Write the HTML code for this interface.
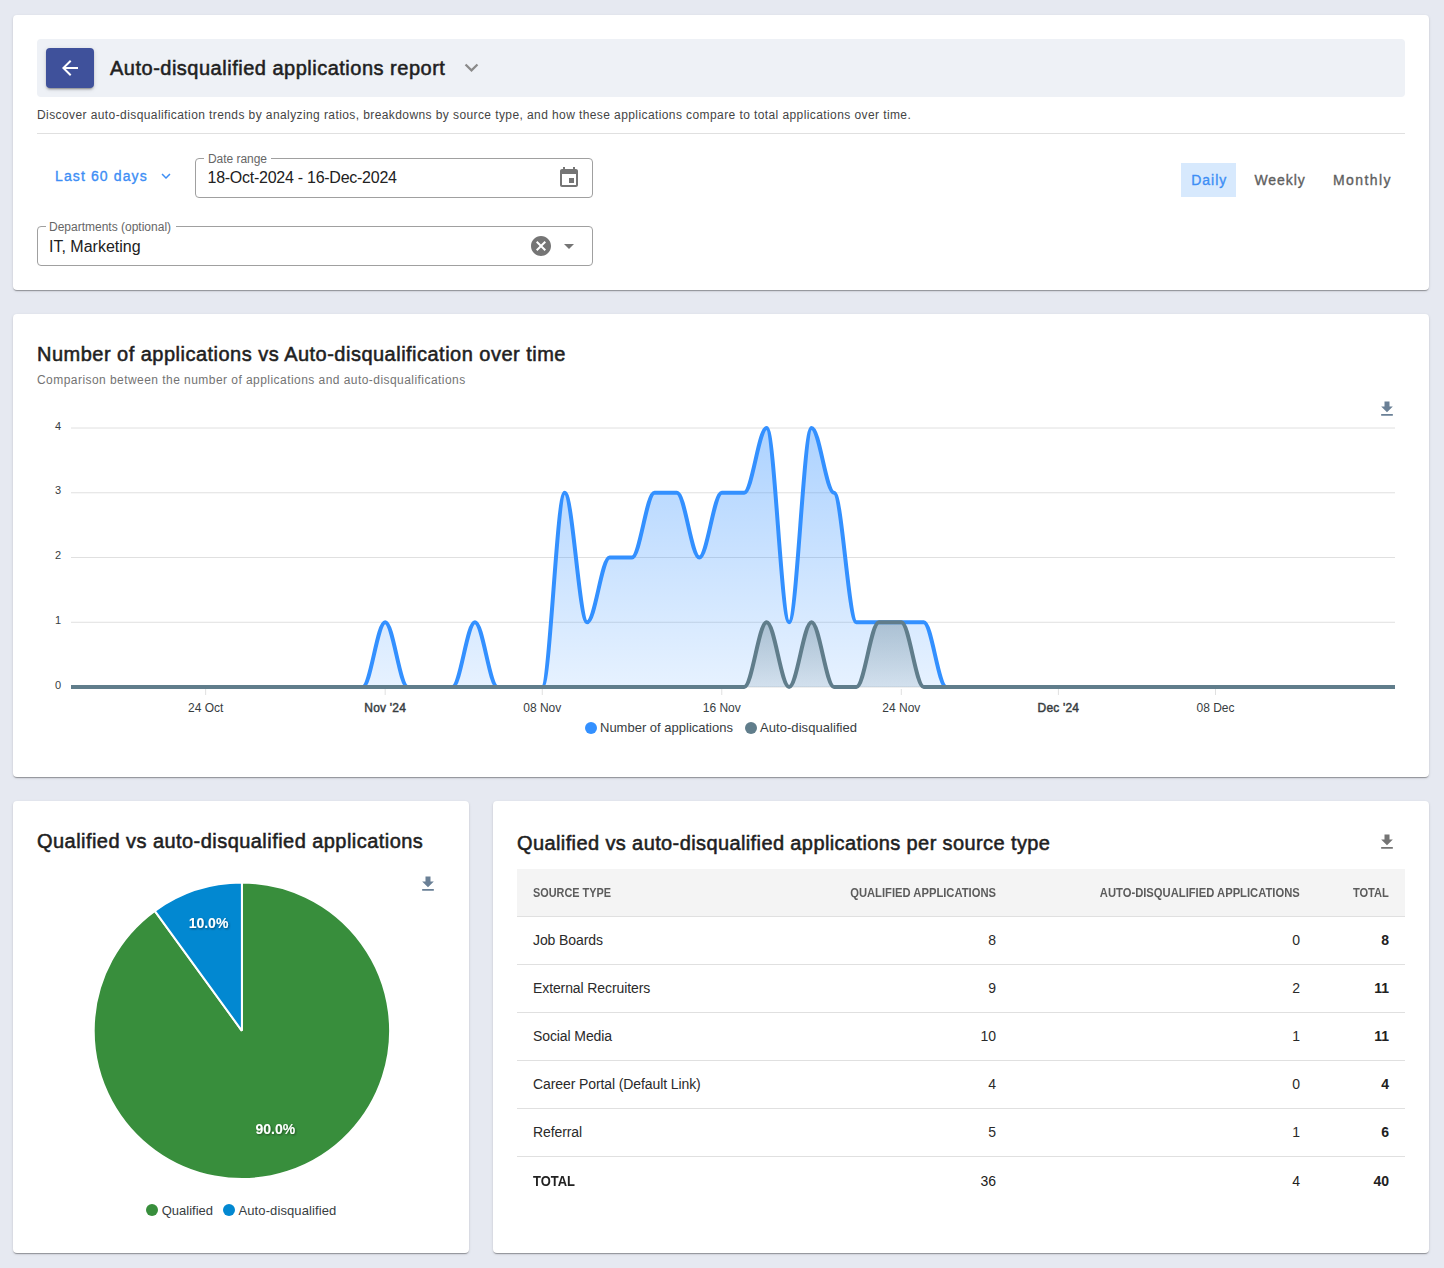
<!DOCTYPE html>
<html><head><meta charset="utf-8"><style>
html,body{margin:0;padding:0;width:1444px;height:1268px;overflow:hidden;background:#e6e9f1;font-family:"Liberation Sans",sans-serif}
.t{position:absolute;line-height:1;white-space:nowrap}
.card{position:absolute;background:#fff;border-radius:4px;box-shadow:0px 2px 1px -1px rgba(0,0,0,0.2),0px 1px 1px 0px rgba(0,0,0,0.14),0px 1px 3px 0px rgba(0,0,0,0.12)}
.backbtn{position:absolute;background:#3f519b;border-radius:4px;box-shadow:0px 3px 1px -2px rgba(0,0,0,0.2),0px 2px 2px 0px rgba(0,0,0,0.14),0px 1px 5px 0px rgba(0,0,0,0.12)}
.ic{position:absolute}
.fs{position:absolute;margin:0;padding:0 8px;box-sizing:border-box;border:1px solid #a0a0a0;border-radius:4px;font-size:12px;line-height:1}
.fs legend{padding:0 4px;visibility:hidden;font-size:12px;line-height:1;height:10px}
</style></head><body>
<div class="card" style="left:13px;top:15px;width:1416px;height:275px"></div>
<div style="position:absolute;left:37px;top:39px;width:1368px;height:58px;background:#eef1f6;border-radius:4px"></div>
<div class="backbtn" style="left:46px;top:48px;width:48px;height:40px"></div>
<svg class="ic" style="left:58.00px;top:56.00px;width:24.00px;height:24.00px;fill:#fff" viewBox="0 0 24 24"><path d="M20 11H7.83l5.59-5.59L12 4l-8 8 8 8 1.41-1.41L7.83 13H20z"/></svg>
<div class="t" style="left:110.00px;top:57.67px;font-size:20px;letter-spacing:0.45px;-webkit-text-stroke:0.55px currentColor;color:#1f1f1f;letter-spacing:0.5px">Auto-disqualified applications report</div>
<svg class="ic" style="left:458.40px;top:53.90px;width:27.00px;height:27.00px;fill:#8a8a8a" viewBox="0 0 24 24"><path d="M16.59 8.59 12 13.17 7.41 8.59 6 10l6 6 6-6z"/></svg>
<div class="t" style="left:37.00px;top:109.34px;font-size:12px;letter-spacing:0.408px;color:#444">Discover auto-disqualification trends by analyzing ratios, breakdowns by source type, and how these applications compare to total applications over time.</div>
<div style="position:absolute;left:37px;top:133px;width:1368px;height:1px;background:#e0e0e0"></div>
<div class="t" style="left:55.00px;top:168.85px;font-size:14px;-webkit-text-stroke:0.35px currentColor;color:#3d8ef5;letter-spacing:1.12px">Last 60 days</div>
<svg class="ic" style="left:157.00px;top:167.40px;width:18.00px;height:18.00px;fill:#3d8ef5" viewBox="0 0 24 24"><path d="M16.59 8.59 12 13.17 7.41 8.59 6 10l6 6 6-6z"/></svg>
<fieldset class="fs" style="left:195px;top:153px;width:398px;height:45px"><legend>Date range</legend></fieldset>
<div class="t" style="left:208.00px;top:153.04px;font-size:12px;color:#666;letter-spacing:-0.05px">Date range</div>
<div class="t" style="left:207.50px;top:170.26px;font-size:16px;color:#212121;letter-spacing:-0.26px">18-Oct-2024 - 16-Dec-2024</div>
<svg class="ic" style="left:557.00px;top:166.00px;width:24.00px;height:24.00px;fill:#757575" viewBox="0 0 24 24"><path d="M17 12h-5v5h5zM16 1v2H8V1H6v2H5c-1.11 0-1.99.9-1.99 2L3 19c0 1.1.89 2 2 2h14c1.1 0 2-.9 2-2V5c0-1.1-.9-2-2-2h-1V1zm3 18H5V8h14z"/></svg>
<div style="position:absolute;left:1181px;top:163px;width:55px;height:34px;background:#d7e9fd"></div>
<div class="t" style="left:1191.30px;top:173.35px;font-size:14px;-webkit-text-stroke:0.35px currentColor;color:#3d8ef5;letter-spacing:0.95px">Daily</div>
<div class="t" style="left:1254.40px;top:173.35px;font-size:14px;-webkit-text-stroke:0.35px currentColor;color:#5f5f5f;letter-spacing:0.93px">Weekly</div>
<div class="t" style="left:1332.90px;top:173.35px;font-size:14px;-webkit-text-stroke:0.35px currentColor;color:#5f5f5f;letter-spacing:1.45px">Monthly</div>
<fieldset class="fs" style="left:37px;top:221px;width:556px;height:45px"><legend>Departments (optional)</legend></fieldset>
<div class="t" style="left:49.00px;top:220.84px;font-size:12px;color:#666">Departments (optional)</div>
<div class="t" style="left:49.00px;top:238.76px;font-size:16px;color:#212121">IT, Marketing</div>
<svg class="ic" style="left:529.00px;top:234.00px;width:24.00px;height:24.00px;fill:#757575" viewBox="0 0 24 24"><path d="M12 2C6.47 2 2 6.47 2 12s4.47 10 10 10 10-4.47 10-10S17.53 2 12 2m5 13.59L15.59 17 12 13.41 8.41 17 7 15.59 10.59 12 7 8.41 8.41 7 12 10.59 15.59 7 17 8.41 13.41 12z"/></svg>
<svg class="ic" style="left:557.00px;top:234.00px;width:24.00px;height:24.00px;fill:#757575" viewBox="0 0 24 24"><path d="M7 10l5 5 5-5z"/></svg>
<div class="card" style="left:13px;top:314px;width:1416px;height:463px"></div>
<div class="t" style="left:37.00px;top:343.77px;font-size:20px;letter-spacing:0.45px;-webkit-text-stroke:0.55px currentColor;color:#1f1f1f;letter-spacing:0.484px">Number of applications vs Auto-disqualification over time</div>
<div class="t" style="left:37.00px;top:373.84px;font-size:12px;letter-spacing:0.45px;color:#737373">Comparison between the number of applications and auto-disqualifications</div>
<svg class="ic" style="left:1377.40px;top:399.20px;width:20.00px;height:20.00px;fill:#6a8096" viewBox="0 0 24 24"><path d="M5 20h14v-2H5zM19 9h-4V3H9v6H5l7 7z"/></svg>
<svg style="position:absolute;left:0;top:0;width:1444px;height:1268px;overflow:visible" viewBox="0 0 1444 1268" font-family="Liberation Sans"><line x1="71" x2="1395" y1="687.00" y2="687.00" stroke="#e0e0e0" stroke-width="1"/><text x="61" y="688.50" text-anchor="end" font-size="11" fill="#373d3f">0</text><line x1="71" x2="1395" y1="622.25" y2="622.25" stroke="#e0e0e0" stroke-width="1"/><text x="61" y="623.75" text-anchor="end" font-size="11" fill="#373d3f">1</text><line x1="71" x2="1395" y1="557.50" y2="557.50" stroke="#e0e0e0" stroke-width="1"/><text x="61" y="559.00" text-anchor="end" font-size="11" fill="#373d3f">2</text><line x1="71" x2="1395" y1="492.75" y2="492.75" stroke="#e0e0e0" stroke-width="1"/><text x="61" y="494.25" text-anchor="end" font-size="11" fill="#373d3f">3</text><line x1="71" x2="1395" y1="428.00" y2="428.00" stroke="#e0e0e0" stroke-width="1"/><text x="61" y="429.50" text-anchor="end" font-size="11" fill="#373d3f">4</text><defs><linearGradient id="gb" x1="0" y1="0" x2="0" y2="1"><stop offset="0" stop-color="#3390ff" stop-opacity="0.4"/><stop offset="1" stop-color="#3390ff" stop-opacity="0.12"/></linearGradient><linearGradient id="gg" x1="0" y1="0" x2="0" y2="1"><stop offset="0" stop-color="#607d8b" stop-opacity="0.38"/><stop offset="1" stop-color="#607d8b" stop-opacity="0.15"/></linearGradient></defs><path d="M71.00 687.00 C78.85 687.00 85.59 687.00 93.44 687.00 C101.29 687.00 108.03 687.00 115.88 687.00 C123.74 687.00 130.47 687.00 138.32 687.00 C146.18 687.00 152.91 687.00 160.76 687.00 C168.62 687.00 175.35 687.00 183.20 687.00 C191.06 687.00 197.79 687.00 205.64 687.00 C213.50 687.00 220.23 687.00 228.08 687.00 C235.94 687.00 242.67 687.00 250.53 687.00 C258.38 687.00 265.11 687.00 272.97 687.00 C280.82 687.00 287.55 687.00 295.41 687.00 C303.26 687.00 309.99 687.00 317.85 687.00 C325.70 687.00 332.43 687.00 340.29 687.00 C348.14 687.00 354.87 687.00 362.73 687.00 C370.58 687.00 377.32 622.25 385.17 622.25 C393.02 622.25 399.76 687.00 407.61 687.00 C415.46 687.00 422.20 687.00 430.05 687.00 C437.91 687.00 444.64 687.00 452.49 687.00 C460.35 687.00 467.08 622.25 474.93 622.25 C482.79 622.25 489.52 687.00 497.37 687.00 C505.23 687.00 511.96 687.00 519.81 687.00 C527.67 687.00 534.40 687.00 542.25 687.00 C550.11 687.00 556.84 492.75 564.69 492.75 C572.55 492.75 579.28 622.25 587.14 622.25 C594.99 622.25 601.72 557.50 609.58 557.50 C617.43 557.50 624.16 557.50 632.02 557.50 C639.87 557.50 646.60 492.75 654.46 492.75 C662.31 492.75 669.04 492.75 676.90 492.75 C684.75 492.75 691.48 557.50 699.34 557.50 C707.19 557.50 713.93 492.75 721.78 492.75 C729.63 492.75 736.37 492.75 744.22 492.75 C752.07 492.75 758.81 428.00 766.66 428.00 C774.52 428.00 781.25 622.25 789.10 622.25 C796.96 622.25 803.69 428.00 811.54 428.00 C819.40 428.00 826.13 492.75 833.98 492.75 C841.84 492.75 848.57 622.25 856.42 622.25 C864.28 622.25 871.01 622.25 878.86 622.25 C886.72 622.25 893.45 622.25 901.31 622.25 C909.16 622.25 915.89 622.25 923.75 622.25 C931.60 622.25 938.33 687.00 946.19 687.00 C954.04 687.00 960.77 687.00 968.63 687.00 C976.48 687.00 983.21 687.00 991.07 687.00 C998.92 687.00 1005.65 687.00 1013.51 687.00 C1021.36 687.00 1028.09 687.00 1035.95 687.00 C1043.80 687.00 1050.54 687.00 1058.39 687.00 C1066.24 687.00 1072.98 687.00 1080.83 687.00 C1088.68 687.00 1095.42 687.00 1103.27 687.00 C1111.13 687.00 1117.86 687.00 1125.71 687.00 C1133.57 687.00 1140.30 687.00 1148.15 687.00 C1156.01 687.00 1162.74 687.00 1170.59 687.00 C1178.45 687.00 1185.18 687.00 1193.03 687.00 C1200.89 687.00 1207.62 687.00 1215.47 687.00 C1223.33 687.00 1230.06 687.00 1237.92 687.00 C1245.77 687.00 1252.50 687.00 1260.36 687.00 C1268.21 687.00 1274.94 687.00 1282.80 687.00 C1290.65 687.00 1297.38 687.00 1305.24 687.00 C1313.09 687.00 1319.82 687.00 1327.68 687.00 C1335.53 687.00 1342.26 687.00 1350.12 687.00 C1357.97 687.00 1364.71 687.00 1372.56 687.00 C1380.41 687.00 1387.15 687.00 1395.00 687.00 L1395.00 687.00 L71.00 687.00 Z" fill="url(#gb)"/><path d="M71.00 687.00 C78.85 687.00 85.59 687.00 93.44 687.00 C101.29 687.00 108.03 687.00 115.88 687.00 C123.74 687.00 130.47 687.00 138.32 687.00 C146.18 687.00 152.91 687.00 160.76 687.00 C168.62 687.00 175.35 687.00 183.20 687.00 C191.06 687.00 197.79 687.00 205.64 687.00 C213.50 687.00 220.23 687.00 228.08 687.00 C235.94 687.00 242.67 687.00 250.53 687.00 C258.38 687.00 265.11 687.00 272.97 687.00 C280.82 687.00 287.55 687.00 295.41 687.00 C303.26 687.00 309.99 687.00 317.85 687.00 C325.70 687.00 332.43 687.00 340.29 687.00 C348.14 687.00 354.87 687.00 362.73 687.00 C370.58 687.00 377.32 687.00 385.17 687.00 C393.02 687.00 399.76 687.00 407.61 687.00 C415.46 687.00 422.20 687.00 430.05 687.00 C437.91 687.00 444.64 687.00 452.49 687.00 C460.35 687.00 467.08 687.00 474.93 687.00 C482.79 687.00 489.52 687.00 497.37 687.00 C505.23 687.00 511.96 687.00 519.81 687.00 C527.67 687.00 534.40 687.00 542.25 687.00 C550.11 687.00 556.84 687.00 564.69 687.00 C572.55 687.00 579.28 687.00 587.14 687.00 C594.99 687.00 601.72 687.00 609.58 687.00 C617.43 687.00 624.16 687.00 632.02 687.00 C639.87 687.00 646.60 687.00 654.46 687.00 C662.31 687.00 669.04 687.00 676.90 687.00 C684.75 687.00 691.48 687.00 699.34 687.00 C707.19 687.00 713.93 687.00 721.78 687.00 C729.63 687.00 736.37 687.00 744.22 687.00 C752.07 687.00 758.81 622.25 766.66 622.25 C774.52 622.25 781.25 687.00 789.10 687.00 C796.96 687.00 803.69 622.25 811.54 622.25 C819.40 622.25 826.13 687.00 833.98 687.00 C841.84 687.00 848.57 687.00 856.42 687.00 C864.28 687.00 871.01 622.25 878.86 622.25 C886.72 622.25 893.45 622.25 901.31 622.25 C909.16 622.25 915.89 687.00 923.75 687.00 C931.60 687.00 938.33 687.00 946.19 687.00 C954.04 687.00 960.77 687.00 968.63 687.00 C976.48 687.00 983.21 687.00 991.07 687.00 C998.92 687.00 1005.65 687.00 1013.51 687.00 C1021.36 687.00 1028.09 687.00 1035.95 687.00 C1043.80 687.00 1050.54 687.00 1058.39 687.00 C1066.24 687.00 1072.98 687.00 1080.83 687.00 C1088.68 687.00 1095.42 687.00 1103.27 687.00 C1111.13 687.00 1117.86 687.00 1125.71 687.00 C1133.57 687.00 1140.30 687.00 1148.15 687.00 C1156.01 687.00 1162.74 687.00 1170.59 687.00 C1178.45 687.00 1185.18 687.00 1193.03 687.00 C1200.89 687.00 1207.62 687.00 1215.47 687.00 C1223.33 687.00 1230.06 687.00 1237.92 687.00 C1245.77 687.00 1252.50 687.00 1260.36 687.00 C1268.21 687.00 1274.94 687.00 1282.80 687.00 C1290.65 687.00 1297.38 687.00 1305.24 687.00 C1313.09 687.00 1319.82 687.00 1327.68 687.00 C1335.53 687.00 1342.26 687.00 1350.12 687.00 C1357.97 687.00 1364.71 687.00 1372.56 687.00 C1380.41 687.00 1387.15 687.00 1395.00 687.00 L1395.00 687.00 L71.00 687.00 Z" fill="url(#gg)"/><path d="M71.00 687.00 C78.85 687.00 85.59 687.00 93.44 687.00 C101.29 687.00 108.03 687.00 115.88 687.00 C123.74 687.00 130.47 687.00 138.32 687.00 C146.18 687.00 152.91 687.00 160.76 687.00 C168.62 687.00 175.35 687.00 183.20 687.00 C191.06 687.00 197.79 687.00 205.64 687.00 C213.50 687.00 220.23 687.00 228.08 687.00 C235.94 687.00 242.67 687.00 250.53 687.00 C258.38 687.00 265.11 687.00 272.97 687.00 C280.82 687.00 287.55 687.00 295.41 687.00 C303.26 687.00 309.99 687.00 317.85 687.00 C325.70 687.00 332.43 687.00 340.29 687.00 C348.14 687.00 354.87 687.00 362.73 687.00 C370.58 687.00 377.32 622.25 385.17 622.25 C393.02 622.25 399.76 687.00 407.61 687.00 C415.46 687.00 422.20 687.00 430.05 687.00 C437.91 687.00 444.64 687.00 452.49 687.00 C460.35 687.00 467.08 622.25 474.93 622.25 C482.79 622.25 489.52 687.00 497.37 687.00 C505.23 687.00 511.96 687.00 519.81 687.00 C527.67 687.00 534.40 687.00 542.25 687.00 C550.11 687.00 556.84 492.75 564.69 492.75 C572.55 492.75 579.28 622.25 587.14 622.25 C594.99 622.25 601.72 557.50 609.58 557.50 C617.43 557.50 624.16 557.50 632.02 557.50 C639.87 557.50 646.60 492.75 654.46 492.75 C662.31 492.75 669.04 492.75 676.90 492.75 C684.75 492.75 691.48 557.50 699.34 557.50 C707.19 557.50 713.93 492.75 721.78 492.75 C729.63 492.75 736.37 492.75 744.22 492.75 C752.07 492.75 758.81 428.00 766.66 428.00 C774.52 428.00 781.25 622.25 789.10 622.25 C796.96 622.25 803.69 428.00 811.54 428.00 C819.40 428.00 826.13 492.75 833.98 492.75 C841.84 492.75 848.57 622.25 856.42 622.25 C864.28 622.25 871.01 622.25 878.86 622.25 C886.72 622.25 893.45 622.25 901.31 622.25 C909.16 622.25 915.89 622.25 923.75 622.25 C931.60 622.25 938.33 687.00 946.19 687.00 C954.04 687.00 960.77 687.00 968.63 687.00 C976.48 687.00 983.21 687.00 991.07 687.00 C998.92 687.00 1005.65 687.00 1013.51 687.00 C1021.36 687.00 1028.09 687.00 1035.95 687.00 C1043.80 687.00 1050.54 687.00 1058.39 687.00 C1066.24 687.00 1072.98 687.00 1080.83 687.00 C1088.68 687.00 1095.42 687.00 1103.27 687.00 C1111.13 687.00 1117.86 687.00 1125.71 687.00 C1133.57 687.00 1140.30 687.00 1148.15 687.00 C1156.01 687.00 1162.74 687.00 1170.59 687.00 C1178.45 687.00 1185.18 687.00 1193.03 687.00 C1200.89 687.00 1207.62 687.00 1215.47 687.00 C1223.33 687.00 1230.06 687.00 1237.92 687.00 C1245.77 687.00 1252.50 687.00 1260.36 687.00 C1268.21 687.00 1274.94 687.00 1282.80 687.00 C1290.65 687.00 1297.38 687.00 1305.24 687.00 C1313.09 687.00 1319.82 687.00 1327.68 687.00 C1335.53 687.00 1342.26 687.00 1350.12 687.00 C1357.97 687.00 1364.71 687.00 1372.56 687.00 C1380.41 687.00 1387.15 687.00 1395.00 687.00" fill="none" stroke="#3390ff" stroke-width="4"/><path d="M71.00 687.00 C78.85 687.00 85.59 687.00 93.44 687.00 C101.29 687.00 108.03 687.00 115.88 687.00 C123.74 687.00 130.47 687.00 138.32 687.00 C146.18 687.00 152.91 687.00 160.76 687.00 C168.62 687.00 175.35 687.00 183.20 687.00 C191.06 687.00 197.79 687.00 205.64 687.00 C213.50 687.00 220.23 687.00 228.08 687.00 C235.94 687.00 242.67 687.00 250.53 687.00 C258.38 687.00 265.11 687.00 272.97 687.00 C280.82 687.00 287.55 687.00 295.41 687.00 C303.26 687.00 309.99 687.00 317.85 687.00 C325.70 687.00 332.43 687.00 340.29 687.00 C348.14 687.00 354.87 687.00 362.73 687.00 C370.58 687.00 377.32 687.00 385.17 687.00 C393.02 687.00 399.76 687.00 407.61 687.00 C415.46 687.00 422.20 687.00 430.05 687.00 C437.91 687.00 444.64 687.00 452.49 687.00 C460.35 687.00 467.08 687.00 474.93 687.00 C482.79 687.00 489.52 687.00 497.37 687.00 C505.23 687.00 511.96 687.00 519.81 687.00 C527.67 687.00 534.40 687.00 542.25 687.00 C550.11 687.00 556.84 687.00 564.69 687.00 C572.55 687.00 579.28 687.00 587.14 687.00 C594.99 687.00 601.72 687.00 609.58 687.00 C617.43 687.00 624.16 687.00 632.02 687.00 C639.87 687.00 646.60 687.00 654.46 687.00 C662.31 687.00 669.04 687.00 676.90 687.00 C684.75 687.00 691.48 687.00 699.34 687.00 C707.19 687.00 713.93 687.00 721.78 687.00 C729.63 687.00 736.37 687.00 744.22 687.00 C752.07 687.00 758.81 622.25 766.66 622.25 C774.52 622.25 781.25 687.00 789.10 687.00 C796.96 687.00 803.69 622.25 811.54 622.25 C819.40 622.25 826.13 687.00 833.98 687.00 C841.84 687.00 848.57 687.00 856.42 687.00 C864.28 687.00 871.01 622.25 878.86 622.25 C886.72 622.25 893.45 622.25 901.31 622.25 C909.16 622.25 915.89 687.00 923.75 687.00 C931.60 687.00 938.33 687.00 946.19 687.00 C954.04 687.00 960.77 687.00 968.63 687.00 C976.48 687.00 983.21 687.00 991.07 687.00 C998.92 687.00 1005.65 687.00 1013.51 687.00 C1021.36 687.00 1028.09 687.00 1035.95 687.00 C1043.80 687.00 1050.54 687.00 1058.39 687.00 C1066.24 687.00 1072.98 687.00 1080.83 687.00 C1088.68 687.00 1095.42 687.00 1103.27 687.00 C1111.13 687.00 1117.86 687.00 1125.71 687.00 C1133.57 687.00 1140.30 687.00 1148.15 687.00 C1156.01 687.00 1162.74 687.00 1170.59 687.00 C1178.45 687.00 1185.18 687.00 1193.03 687.00 C1200.89 687.00 1207.62 687.00 1215.47 687.00 C1223.33 687.00 1230.06 687.00 1237.92 687.00 C1245.77 687.00 1252.50 687.00 1260.36 687.00 C1268.21 687.00 1274.94 687.00 1282.80 687.00 C1290.65 687.00 1297.38 687.00 1305.24 687.00 C1313.09 687.00 1319.82 687.00 1327.68 687.00 C1335.53 687.00 1342.26 687.00 1350.12 687.00 C1357.97 687.00 1364.71 687.00 1372.56 687.00 C1380.41 687.00 1387.15 687.00 1395.00 687.00" fill="none" stroke="#607d8b" stroke-width="4"/><line x1="205.64" x2="205.64" y1="689" y2="695" stroke="#e0e0e0"/><text x="205.64" y="711.5" text-anchor="middle" font-size="12" fill="#373d3f">24 Oct</text><line x1="385.17" x2="385.17" y1="689" y2="695" stroke="#e0e0e0"/><text x="385.17" y="711.5" text-anchor="middle" font-size="12" fill="#373d3f" stroke="#373d3f" stroke-width="0.45" letter-spacing="0.2">Nov '24</text><line x1="542.25" x2="542.25" y1="689" y2="695" stroke="#e0e0e0"/><text x="542.25" y="711.5" text-anchor="middle" font-size="12" fill="#373d3f">08 Nov</text><line x1="721.78" x2="721.78" y1="689" y2="695" stroke="#e0e0e0"/><text x="721.78" y="711.5" text-anchor="middle" font-size="12" fill="#373d3f">16 Nov</text><line x1="901.31" x2="901.31" y1="689" y2="695" stroke="#e0e0e0"/><text x="901.31" y="711.5" text-anchor="middle" font-size="12" fill="#373d3f">24 Nov</text><line x1="1058.39" x2="1058.39" y1="689" y2="695" stroke="#e0e0e0"/><text x="1058.39" y="711.5" text-anchor="middle" font-size="12" fill="#373d3f" stroke="#373d3f" stroke-width="0.45" letter-spacing="0.2">Dec '24</text><line x1="1215.47" x2="1215.47" y1="689" y2="695" stroke="#e0e0e0"/><text x="1215.47" y="711.5" text-anchor="middle" font-size="12" fill="#373d3f">08 Dec</text></svg>
<div style="position:absolute;left:584.6px;top:721.7px;width:12px;height:12px;border-radius:6px;background:#3390ff"></div>
<div class="t" style="left:600.00px;top:721.20px;font-size:13px;color:#373d3f">Number of applications</div>
<div style="position:absolute;left:744.7px;top:721.7px;width:12px;height:12px;border-radius:6px;background:#607d8b"></div>
<div class="t" style="left:760.00px;top:721.20px;font-size:13px;color:#373d3f;letter-spacing:0.06px">Auto-disqualified</div>
<div class="card" style="left:13px;top:801px;width:456px;height:452px"></div>
<div class="t" style="left:37.00px;top:830.57px;font-size:20px;letter-spacing:0.45px;-webkit-text-stroke:0.55px currentColor;color:#1f1f1f">Qualified vs auto-disqualified applications</div>
<svg class="ic" style="left:418.00px;top:874.40px;width:20.00px;height:20.00px;fill:#6a8096" viewBox="0 0 24 24"><path d="M5 20h14v-2H5zM19 9h-4V3H9v6H5l7 7z"/></svg>
<svg style="position:absolute;left:0;top:0;width:1444px;height:1268px;overflow:visible" viewBox="0 0 1444 1268" font-family="Liberation Sans"><path d="M241.90 1030.80 L241.90 882.60 A148.20 148.20 0 1 1 154.79 910.90 L241.90 1030.80" fill="#388e3c" stroke="#fff" stroke-width="2"/><path d="M241.90 1030.80 L154.79 910.90 A148.20 148.20 0 0 1 241.90 882.60 L241.90 1030.80" fill="#0288d1" stroke="#fff" stroke-width="2"/><defs><filter id="ds" x="-50%" y="-50%" width="200%" height="200%"><feDropShadow dx="1" dy="1" stdDeviation="1" flood-color="#000" flood-opacity="0.45"/></filter></defs><text x="208.5" y="927.9" text-anchor="middle" font-size="14" font-weight="bold" fill="#fff" filter="url(#ds)">10.0%</text><text x="275.4" y="1134" text-anchor="middle" font-size="14" font-weight="bold" fill="#fff" filter="url(#ds)">90.0%</text></svg>
<div style="position:absolute;left:145.7px;top:1204px;width:12px;height:12px;border-radius:6px;background:#388e3c"></div>
<div class="t" style="left:161.70px;top:1203.50px;font-size:13px;color:#373d3f">Qualified</div>
<div style="position:absolute;left:223px;top:1204px;width:12px;height:12px;border-radius:6px;background:#0288d1"></div>
<div class="t" style="left:238.50px;top:1203.50px;font-size:13px;color:#373d3f;letter-spacing:0.1px">Auto-disqualified</div>
<div class="card" style="left:493px;top:801px;width:936px;height:452px"></div>
<div class="t" style="left:517.00px;top:832.97px;font-size:20px;letter-spacing:0.45px;-webkit-text-stroke:0.55px currentColor;color:#1f1f1f;letter-spacing:0.39px">Qualified vs auto-disqualified applications per source type</div>
<svg class="ic" style="left:1376.80px;top:831.90px;width:20.00px;height:20.00px;fill:#757575" viewBox="0 0 24 24"><path d="M5 20h14v-2H5zM19 9h-4V3H9v6H5l7 7z"/></svg>
<div style="position:absolute;left:517px;top:869px;width:888px;height:47px;background:#f4f4f4;border-bottom:1px solid #e0e0e0"></div>
<div class="t" style="left:533.00px;top:886.54px;font-size:12px;font-weight:bold;color:#5c5c5c;transform:scaleX(0.9070);transform-origin:left">SOURCE TYPE</div>
<div class="t" style="right:448.00px;top:886.54px;font-size:12px;font-weight:bold;color:#5c5c5c;transform:scaleX(0.9346);transform-origin:right">QUALIFIED APPLICATIONS</div>
<div class="t" style="right:144.00px;top:886.54px;font-size:12px;font-weight:bold;color:#5c5c5c;transform:scaleX(0.9355);transform-origin:right">AUTO-DISQUALIFIED APPLICATIONS</div>
<div class="t" style="right:55.00px;top:886.54px;font-size:12px;font-weight:bold;color:#5c5c5c;transform:scaleX(0.9254);transform-origin:right">TOTAL</div>
<div class="t" style="left:533.00px;top:932.85px;font-size:14px;color:#2a2a2a;letter-spacing:-0.1px">Job Boards</div>
<div class="t" style="right:448.00px;top:932.85px;font-size:14px;color:#2a2a2a">8</div>
<div class="t" style="right:144.00px;top:932.85px;font-size:14px;color:#2a2a2a">0</div>
<div class="t" style="right:55.00px;top:932.85px;font-size:14px;color:#212121;font-weight:bold">8</div>
<div style="position:absolute;left:517px;top:964px;width:888px;height:1px;background:#e0e0e0"></div>
<div class="t" style="left:533.00px;top:980.85px;font-size:14px;color:#2a2a2a;letter-spacing:-0.1px">External Recruiters</div>
<div class="t" style="right:448.00px;top:980.85px;font-size:14px;color:#2a2a2a">9</div>
<div class="t" style="right:144.00px;top:980.85px;font-size:14px;color:#2a2a2a">2</div>
<div class="t" style="right:55.00px;top:980.85px;font-size:14px;color:#212121;font-weight:bold">11</div>
<div style="position:absolute;left:517px;top:1012px;width:888px;height:1px;background:#e0e0e0"></div>
<div class="t" style="left:533.00px;top:1028.85px;font-size:14px;color:#2a2a2a;letter-spacing:-0.1px">Social Media</div>
<div class="t" style="right:448.00px;top:1028.85px;font-size:14px;color:#2a2a2a">10</div>
<div class="t" style="right:144.00px;top:1028.85px;font-size:14px;color:#2a2a2a">1</div>
<div class="t" style="right:55.00px;top:1028.85px;font-size:14px;color:#212121;font-weight:bold">11</div>
<div style="position:absolute;left:517px;top:1060px;width:888px;height:1px;background:#e0e0e0"></div>
<div class="t" style="left:533.00px;top:1076.85px;font-size:14px;color:#2a2a2a;letter-spacing:-0.1px">Career Portal (Default Link)</div>
<div class="t" style="right:448.00px;top:1076.85px;font-size:14px;color:#2a2a2a">4</div>
<div class="t" style="right:144.00px;top:1076.85px;font-size:14px;color:#2a2a2a">0</div>
<div class="t" style="right:55.00px;top:1076.85px;font-size:14px;color:#212121;font-weight:bold">4</div>
<div style="position:absolute;left:517px;top:1108px;width:888px;height:1px;background:#e0e0e0"></div>
<div class="t" style="left:533.00px;top:1124.85px;font-size:14px;color:#2a2a2a;letter-spacing:-0.1px">Referral</div>
<div class="t" style="right:448.00px;top:1124.85px;font-size:14px;color:#2a2a2a">5</div>
<div class="t" style="right:144.00px;top:1124.85px;font-size:14px;color:#2a2a2a">1</div>
<div class="t" style="right:55.00px;top:1124.85px;font-size:14px;color:#212121;font-weight:bold">6</div>
<div style="position:absolute;left:517px;top:1156px;width:888px;height:1px;background:#e0e0e0"></div>
<div class="t" style="left:533.00px;top:1174.15px;font-size:14px;color:#212121;font-weight:bold;transform:scaleX(0.9251);transform-origin:left">TOTAL</div>
<div class="t" style="right:448.00px;top:1174.15px;font-size:14px;color:#212121">36</div>
<div class="t" style="right:144.00px;top:1174.15px;font-size:14px;color:#212121">4</div>
<div class="t" style="right:55.00px;top:1174.15px;font-size:14px;color:#212121;font-weight:bold">40</div>
</body></html>
